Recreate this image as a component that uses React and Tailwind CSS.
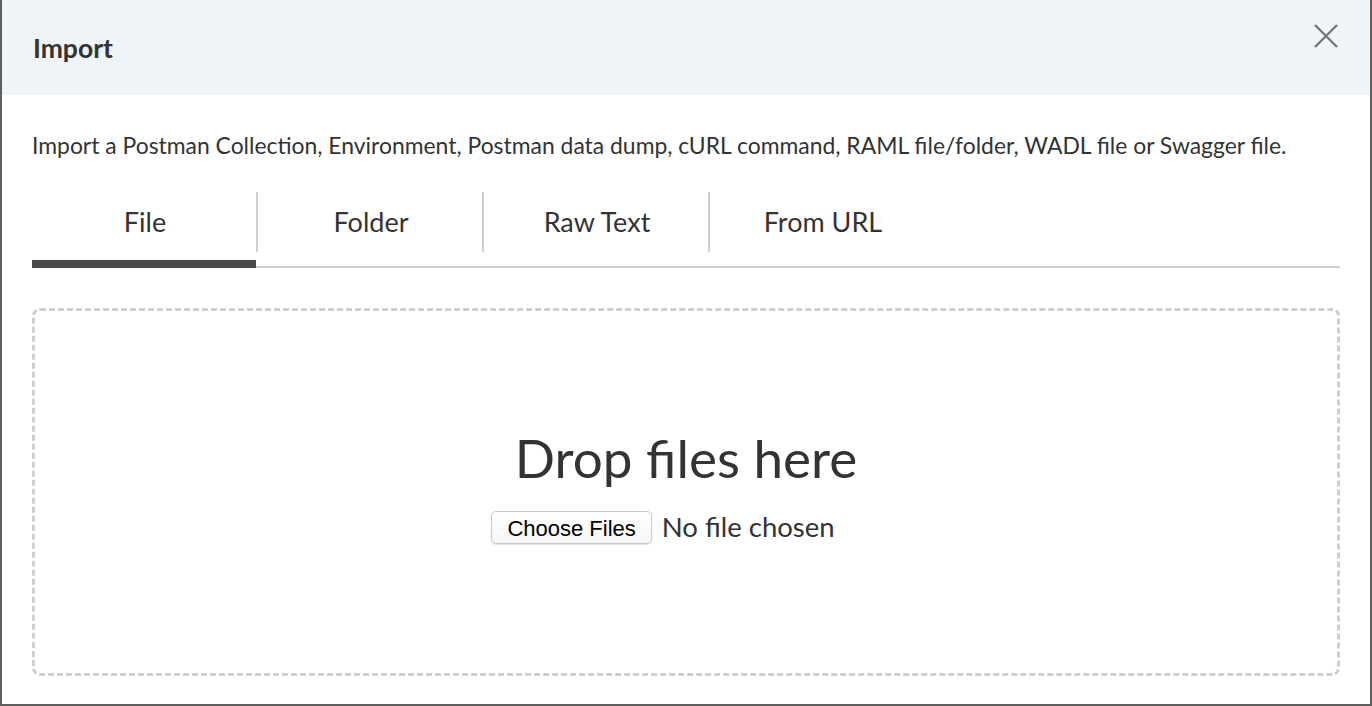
const lato = { fontFamily: 'Lato, "Noto Sans", sans-serif' };

const tabs = ['File', 'Folder', 'Raw Text', 'From URL'];

const CloseIcon = () => (
  <svg width="26" height="26" viewBox="0 0 26 26" fill="none" stroke="#777" strokeWidth="2.4">
    <path d="M2 2 L24 24 M24 2 L2 24" />
  </svg>
);

export default function App() {
  return (
    <div className="h-[706px] w-[1372px] overflow-hidden bg-white font-[Lato,sans-serif] text-[#333]">
      <div className="flex h-full flex-col border-x-2 border-b-2 border-[#5f5f5f]">
        <div className="flex h-[95px] shrink-0 items-center justify-between bg-[#eef4f7] pl-[31px] pr-[30px]">
          <h1 className="mt-[3px] text-[26.5px] font-bold text-[#333]">Import</h1>
          <button className="-mt-[24px] mr-[1px]">
            <CloseIcon />
          </button>
        </div>
        <div className="flex flex-1 flex-col px-[30px] pt-[35px]">
          <p className="text-[22.9px] leading-[30px] text-[#333]">
            Import a Postman Collection, Environment, Postman data dump, cURL command, RAML file/folder, WADL file or
            Swagger file.
          </p>
          <div className="mt-[32px] flex border-b-2 border-[#d0d0d0]">
            {tabs.map((t, i) => (
              <div key={t} className="relative -mb-[2px] w-[226px]">
                <div className="flex h-[60px] items-center justify-center">
                  <span className="text-[27px] text-[#333]">{t}</span>
                </div>
                {i < 3 && <div className="absolute right-0 top-0 h-[60px] w-[2px] bg-[#d0d0d0]" />}
                <div className={`mt-[8px] h-[8px] w-[224px] ${i === 0 ? 'bg-[#4a4a4a]' : ''}`} />
              </div>
            ))}
          </div>
          <div className="mb-[28px] mt-[40px] flex flex-1 flex-col items-center justify-center rounded-[8px] border-[3px] border-dashed border-[#cfcfcf] pb-[15px]">
            <div className="mt-[6px] text-[53px] leading-[62px] text-[#333]">Drop files here</div>
            <div className="mr-[46px] mt-[17px] flex items-center gap-[10px]">
              <button
                className="h-[33px] rounded-[5px] border border-[#c8c8c8] bg-gradient-to-b from-white to-[#f6f6f6] px-[15px] pt-[3px] text-[22px] leading-none text-black shadow-[0_1px_1px_rgba(0,0,0,0.12)]"
                style={{ fontFamily: '"Liberation Sans", Arial, sans-serif' }}
              >
                Choose Files
              </button>
              <span className="text-[27.5px] text-[#333]" style={lato}>No file chosen</span>
            </div>
          </div>
        </div>
      </div>
    </div>
  );
}
